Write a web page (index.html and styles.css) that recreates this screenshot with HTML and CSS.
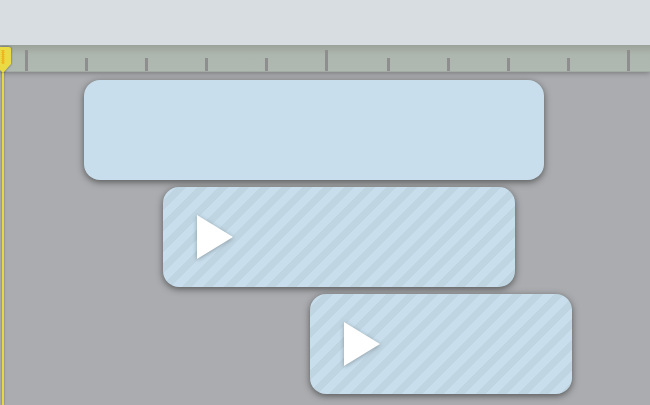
FILE: index.html
```html
<!DOCTYPE html>
<html lang="en">
<head>
<meta charset="utf-8">
<meta name="viewport" content="width=device-width, initial-scale=1">
<title>Timeline</title>
<link rel="stylesheet" href="styles.css">
</head>
<body>
<header class="toolbar"></header>
<main class="timeline">
  <div class="ruler">
    <svg class="ticks" width="640" height="26" shape-rendering="crispEdges" aria-hidden="true">
      <path d="M25 5h3v21h-3zM85 13h3v13h-3zM145 13h3v13h-3zM205 13h3v13h-3zM265 13h3v13h-3zM325 5h3v21h-3zM387 13h3v13h-3zM447 13h3v13h-3zM507 13h3v13h-3zM567 13h3v13h-3zM627 5h3v21h-3z"/>
    </svg>
  </div>
  <div class="tracks">
    <div class="clip" style="--start: 84px; --length: 460px"></div>
    <div class="clip media" style="--start: 163px; --length: 352px">
      <button class="play" type="button" aria-label="Play"><svg width="36" height="46" viewBox="0 0 36 46"><path d="M0 1L36 23L0 45z"/></svg></button>
    </div>
    <div class="clip media" style="--start: 310px; --length: 262px">
      <button class="play" type="button" aria-label="Play"><svg width="36" height="46" viewBox="0 0 36 46"><path d="M0 1L36 23L0 45z"/></svg></button>
    </div>
  </div>
  <div class="playhead">
    <svg class="handle" width="12" height="27" viewBox="0 0 12 27" aria-hidden="true">
      <path class="body" d="M0 2H9Q11 2 11 4V19L4 27H2L0 25z"/>
      <path class="grip" d="M2 5h2v14h-2z"/>
      <path class="grip-notches" d="M1.500 5V19M4.500 5V19"/>
    </svg>
  </div>
</main>
</body>
</html>
```
FILE: styles.css
```css
* {
  box-sizing: border-box;
}

body {
  margin: 0;
  min-height: 100vh;
  display: flex;
  flex-direction: column;
  background: #abacaf;
  font-family: "Liberation Sans", sans-serif;
}

.toolbar {
  height: 45px;
  background: #d8dde1;
}

.timeline {
  flex: 1;
  position: relative;
  overflow: hidden;
}

.ruler {
  height: 27px;
  overflow: hidden;
  background: linear-gradient(#9ba299, #aeb7af 10px, #b0b9b1);
  border-bottom: 1px solid #a4aaa6;
  box-shadow: 0 1px 5px rgba(0, 0, 0, 0.3);
}

.ticks {
  display: block;
  fill: #8d8e8d;
}

.tracks {
  display: grid;
  gap: 7px;
  padding: 8px 0 11px;
}

.clip {
  display: flex;
  align-items: center;
  width: var(--length);
  height: 100px;
  margin-left: var(--start);
  border-radius: 16px;
  background-color: #c8deec;
  box-shadow: 0 2px 7px rgba(0, 0, 0, 0.5);
}

.media {
  padding-left: 34px;
  background-image: linear-gradient(135deg, #bfd5e1 6%, transparent 6%, transparent 33%, #bfd5e1 33%, #bfd5e1 56%, transparent 56%, transparent 83%, #bfd5e1 83%);
  background-size: 21px 21px;
}

.play {
  padding: 0;
  border: 0;
  background: none;
  cursor: pointer;
}

.play svg {
  display: block;
  overflow: visible;
  fill: #fff;
  filter: drop-shadow(0 1px 2px rgba(0, 0, 0, 0.3));
}

.playhead {
  position: absolute;
  top: 0;
  bottom: 0;
  left: 0;
  width: 12px;
}

.playhead::before {
  content: "";
  position: absolute;
  top: 25px;
  bottom: 0;
  left: 2px;
  width: 2px;
  background: #e5d842;
  box-shadow: 0 0 2px rgba(0, 0, 0, 0.4);
}

.handle {
  position: relative;
  display: block;
  overflow: visible;
  filter: drop-shadow(0 0 1px rgba(0, 0, 0, 0.5));
}

.body {
  fill: #eadb45;
}

.grip {
  fill: #f0b621;
}

.grip-notches {
  fill: none;
  stroke: #f0b621;
  stroke-opacity: 0.6;
  stroke-dasharray: 1 1;
}
```
